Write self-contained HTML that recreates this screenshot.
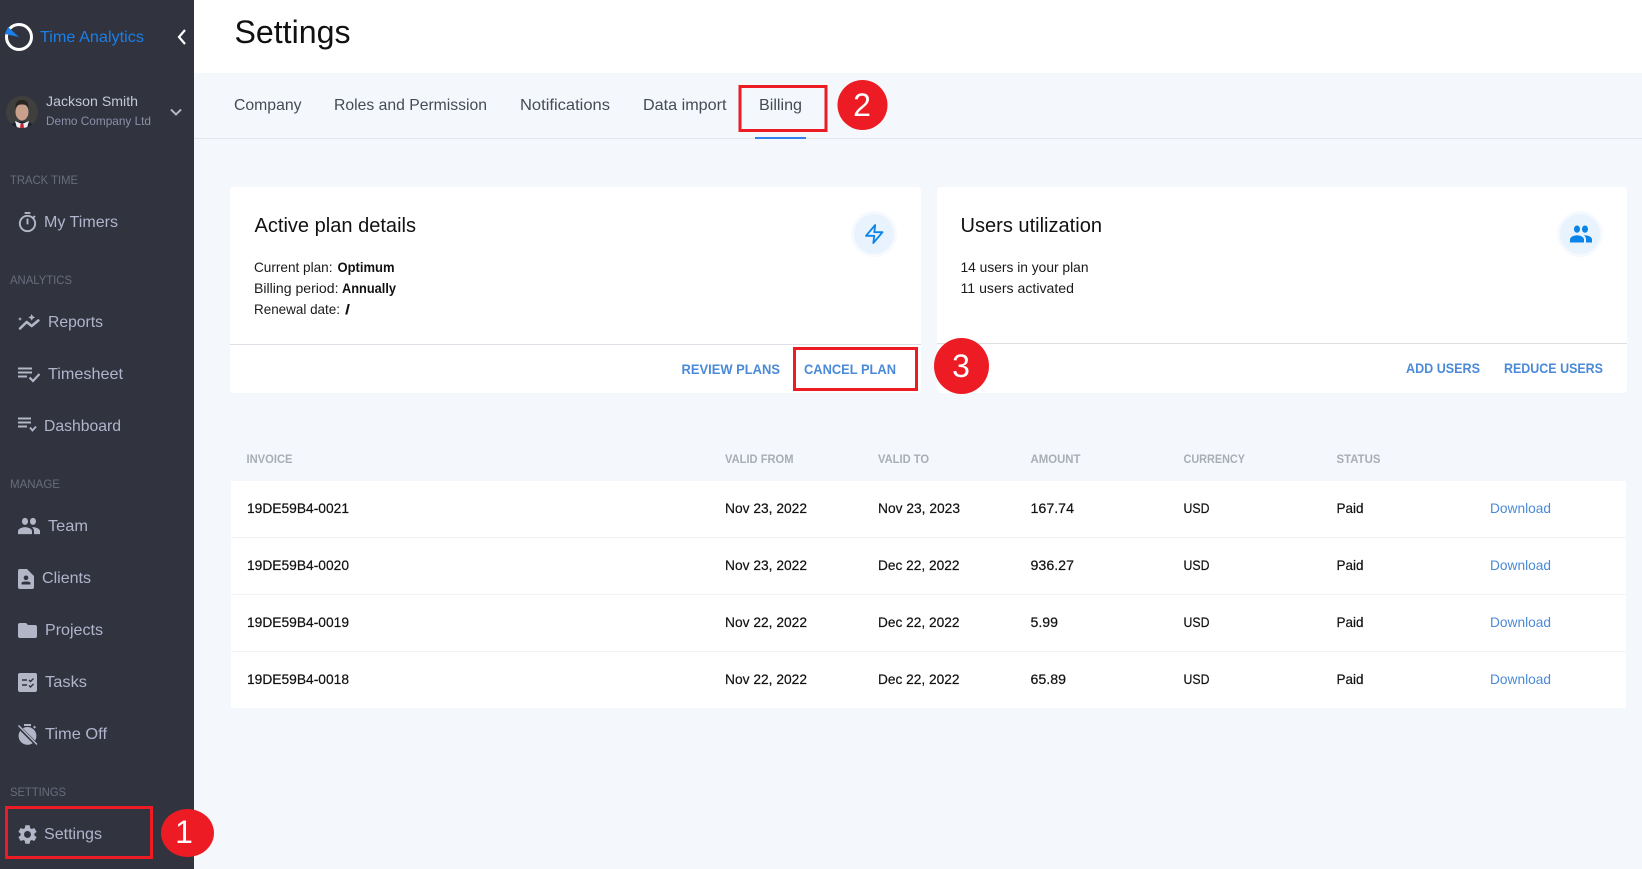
<!DOCTYPE html>
<html lang="en">
<head>
<meta charset="utf-8">
<title>Settings - Billing</title>
<style>
html,body{margin:0;padding:0;width:1642px;height:869px;overflow:hidden;background:#f4f7fb}
svg{display:block}
text{font-family:"Liberation Sans",sans-serif;white-space:pre}
.nav{font-size:16px;fill:#b0b5cc}
.sec{font-size:12px;fill:#686c7c}
.tab{font-size:16px;fill:#454a55}
.h2{font-size:20px;fill:#111}
.p{font-size:14px;fill:#1a1a1a}
.b{font-size:14px;font-weight:700;fill:#111}
.act{font-size:14px;font-weight:700;fill:#4a8ad8}
.th{font-size:12px;font-weight:700;fill:#a9adb5}
.td{font-size:14px;fill:#111;stroke:#111;stroke-width:.2}
.dl{font-size:14px;fill:#4a8ad8}
.num{font-size:32px;fill:#fff;text-anchor:middle}
.ic{fill:#b2b6c6}
</style>
</head>
<body>
<svg width="1642" height="869" viewBox="0 0 1642 869" xmlns="http://www.w3.org/2000/svg">
<rect width="1642" height="869" fill="#f4f7fb"/>
<!-- header -->
<rect x="194" width="1448" height="73" fill="#fff"/>
<text x="234.5" y="43" font-size="32" fill="#111" textLength="116" lengthAdjust="spacingAndGlyphs">Settings</text>
<!-- tabs -->
<rect x="194" y="138" width="1448" height="1" fill="#e3e6ec"/>
<text class="tab" x="234" y="110" textLength="67.5" lengthAdjust="spacingAndGlyphs">Company</text>
<text class="tab" x="334" y="110" textLength="153" lengthAdjust="spacingAndGlyphs">Roles and Permission</text>
<text class="tab" x="520" y="110" textLength="90" lengthAdjust="spacingAndGlyphs">Notifications</text>
<text class="tab" x="643" y="110" textLength="83.5" lengthAdjust="spacingAndGlyphs">Data import</text>
<text class="tab" x="759" y="110" textLength="43" lengthAdjust="spacingAndGlyphs">Billing</text>
<rect x="755" y="137" width="51" height="2" fill="#2f80ed"/>
<!-- sidebar -->
<rect width="194" height="869" fill="#31333f"/>
<circle cx="19" cy="37" r="12.5" fill="none" stroke="#fff" stroke-width="3"/>
<path d="M5 33L31 30Z" fill="none"/>
<path d="M5 34L8 27L19 37Z" fill="#1a7fe8"/>
<text x="40" y="42" font-size="16" fill="#1a7fe8" textLength="104" lengthAdjust="spacingAndGlyphs">Time Analytics</text>
<path d="M185 30L179 37L185 44" fill="none" stroke="#fff" stroke-width="2.200"/>
<!-- avatar -->
<clipPath id="av"><circle cx="22" cy="112" r="16"/></clipPath>
<g clip-path="url(#av)">
<rect x="6" y="96" width="32" height="32" fill="#3f3f3e"/>
<path d="M10 128C11 123 15 121.500 22 121.500S33 123 34 128Z" fill="#1c2030"/>
<path d="M15 121L22 124L29 121L27 128H17Z" fill="#eee"/>
<path d="M20.500 124H23.500L24 128H20Z" fill="#d02030"/>
<ellipse cx="22" cy="112" rx="6.500" ry="8.500" fill="#c8a08c"/>
<path d="M15.500 109C15 102 18 100 22 100S29 102 28.500 109C27.500 105 25 104.500 22 104.500S16.500 105 15.500 109Z" fill="#2a2522"/>
</g>
<text x="46" y="106" font-size="14" fill="#c4c8d8" textLength="92" lengthAdjust="spacingAndGlyphs">Jackson Smith</text>
<text x="46" y="125" font-size="12" fill="#8a90a8" textLength="105" lengthAdjust="spacingAndGlyphs">Demo Company Ltd</text>
<path d="M171 109.500L176 114.500L181 109.500" fill="none" stroke="#b2b6c6" stroke-width="2"/>

<text class="sec" x="10" y="184" textLength="68" lengthAdjust="spacingAndGlyphs">TRACK TIME</text>
<svg x="16" y="211" width="23" height="23" viewBox="0 0 24 24"><path class="ic" d="M15 1H9v2h6V1zm-4 13h2V8h-2v6zm8.030-6.610l1.420-1.420c-.43-.51-.9-.99-1.410-1.410l-1.420 1.420C16.070 4.740 14.120 4 12 4c-4.970 0-9 4.030-9 9s4.020 9 9 9 9-4.030 9-9c0-2.120-.74-4.070-1.970-5.610zM12 20c-3.870 0-7-3.130-7-7s3.130-7 7-7 7 3.130 7 7-3.130 7-7 7z"/></svg>
<text class="nav" x="44" y="227" textLength="74" lengthAdjust="spacingAndGlyphs">My Timers</text>

<text class="sec" x="10" y="284" textLength="62" lengthAdjust="spacingAndGlyphs">ANALYTICS</text>
<path d="M20 328.500L26.700 322L31.700 326L38.300 320.500" fill="none" stroke="#b2b6c6" stroke-width="2.600" stroke-linecap="round" stroke-linejoin="round"/>
<path d="M31.700 314l1.100 2.300 2.300 1.100-2.300 1.100-1.100 2.300-1.100-2.300-2.300-1.100 2.300-1.100zM20 317l.6 1.400 1.400.6-1.400.6-.6 1.400-.6-1.400-1.400-.6 1.400-.6z" class="ic"/>
<text class="nav" x="48" y="327" textLength="55" lengthAdjust="spacingAndGlyphs">Reports</text>

<path d="M18 368.500H32M18 372.500H32M18 376.500H27" fill="none" stroke="#b2b6c6" stroke-width="2"/>
<path d="M29.500 377.500L33 381L39.500 374" fill="none" stroke="#b2b6c6" stroke-width="2.200"/>
<text class="nav" x="48" y="379" textLength="75" lengthAdjust="spacingAndGlyphs">Timesheet</text>

<path d="M18 418.500H31M18 422.500H31M18 426.500H27" fill="none" stroke="#b2b6c6" stroke-width="2"/>
<path d="M30 427.500L32.500 430.500L36 426.500" fill="none" stroke="#b2b6c6" stroke-width="1.800"/>
<text class="nav" x="44" y="431" textLength="77" lengthAdjust="spacingAndGlyphs">Dashboard</text>

<text class="sec" x="10" y="488" textLength="50" lengthAdjust="spacingAndGlyphs">MANAGE</text>
<svg x="17" y="512" width="24" height="28" viewBox="0 0 24 24" preserveAspectRatio="none"><path class="ic" d="M16 11c1.660 0 2.990-1.340 2.990-3S17.660 5 16 5c-1.660 0-3 1.340-3 3s1.340 3 3 3zm-8 0c1.660 0 2.990-1.340 2.990-3S9.660 5 8 5C6.340 5 5 6.340 5 8s1.340 3 3 3zm0 2c-2.330 0-7 1.170-7 3.500V19h14v-2.500c0-2.330-4.670-3.500-7-3.500zm8 0c-.29 0-.62.020-.97.050 1.160.84 1.970 1.970 1.970 3.450V19h6v-2.500c0-2.330-4.670-3.500-7-3.500z"/></svg>
<text class="nav" x="48" y="531" textLength="40" lengthAdjust="spacingAndGlyphs">Team</text>

<path class="ic" fill-rule="evenodd" d="M20 569H27L34 576V587Q34 589 32 589H20Q18 589 18 587V571Q18 569 20 569ZM26 575.500a2.300 2.300 0 1 0 .01 0ZM21.500 584.500H30.500V583Q30.500 581.500 26 581.500T21.500 583Z"/>
<text class="nav" x="42" y="583" textLength="49" lengthAdjust="spacingAndGlyphs">Clients</text>

<path class="ic" d="M20 623H26L28 625H35Q37 625 37 627V636Q37 638 35 638H20Q18 638 18 636V625Q18 623 20 623Z"/>
<text class="nav" x="45" y="635" textLength="58" lengthAdjust="spacingAndGlyphs">Projects</text>

<rect class="ic" x="18" y="673" width="19" height="19" rx="2"/>
<path d="M22 680H27M22 685H27M29 680L30.500 681.500L33.500 678.500M29 685.500L30.500 687L33.500 684" fill="none" stroke="#31333f" stroke-width="1.400"/>
<text class="nav" x="45" y="687" textLength="42" lengthAdjust="spacingAndGlyphs">Tasks</text>

<path class="ic" d="M24 724H31V726H24ZM27.500 727a8.900 8.900 0 1 1-.01 0Z"/>
<path class="ic" d="M33 727l1.500-1.300 1.500 1.500-1.400 1.400z"/>
<path d="M18 726L37 745" stroke="#31333f" stroke-width="3.500"/>
<path d="M18.500 725.500L37 744.500" stroke="#b2b6c6" stroke-width="1.600"/>
<text class="nav" x="45" y="739" textLength="62" lengthAdjust="spacingAndGlyphs">Time Off</text>

<text class="sec" x="10" y="796" textLength="56" lengthAdjust="spacingAndGlyphs">SETTINGS</text>
<svg x="16" y="823" width="23" height="23" viewBox="0 0 24 24"><path class="ic" d="M19.140 12.940c.04-.3.060-.61.060-.94 0-.32-.02-.64-.07-.94l2.030-1.580c.18-.14.230-.41.120-.61l-1.920-3.320c-.12-.22-.37-.29-.59-.22l-2.390.96c-.5-.38-1.030-.7-1.620-.94l-.36-2.540c-.04-.24-.24-.41-.48-.41h-3.840c-.24 0-.43.170-.47.410l-.36 2.540c-.59.240-1.130.570-1.620.940l-2.390-.96c-.22-.08-.47 0-.59.220L2.740 8.870c-.12.210-.08.470.120.610l2.030 1.580c-.05.3-.09.630-.09.940s.020.640.070.940l-2.030 1.580c-.18.140-.23.410-.12.610l1.920 3.320c.12.220.370.290.590.220l2.390-.96c.5.380 1.030.7 1.620.94l.36 2.540c.05.240.240.410.480.410h3.840c.24 0 .44-.17.470-.41l.36-2.540c.59-.24 1.130-.56 1.620-.94l2.390.96c.22.080.47 0 .59-.22l1.920-3.320c.12-.22.070-.47-.12-.61l-2.010-1.580zM12 15.600c-1.980 0-3.600-1.620-3.600-3.600s1.620-3.600 3.600-3.600 3.600 1.620 3.600 3.600-1.620 3.600-3.600 3.600z"/></svg>
<text class="nav" x="44" y="839" textLength="58" lengthAdjust="spacingAndGlyphs">Settings</text>

<!-- card 1 -->
<rect x="230" y="187" width="691" height="206" rx="4" fill="#fff"/>
<rect x="230" y="344" width="691" height="1" fill="#dcdfe6"/>
<text class="h2" x="254.500" y="232" textLength="161.500" lengthAdjust="spacingAndGlyphs">Active plan details</text>
<text class="p" x="254" y="272" textLength="78.500" lengthAdjust="spacingAndGlyphs">Current plan:</text>
<text class="b" x="337.500" y="272" textLength="57" lengthAdjust="spacingAndGlyphs">Optimum</text>
<text class="p" x="254" y="293" textLength="84.500" lengthAdjust="spacingAndGlyphs">Billing period:</text>
<text class="b" x="342" y="293" textLength="54" lengthAdjust="spacingAndGlyphs">Annually</text>
<text class="p" x="254" y="314" textLength="86" lengthAdjust="spacingAndGlyphs">Renewal date:</text>
<text class="b" x="345" y="314" textLength="5" lengthAdjust="spacingAndGlyphs">/</text>
<circle cx="874" cy="234" r="23" fill="#f6fafe"/>
<circle cx="874" cy="234" r="20" fill="#e8f3fe"/>
<path d="M875.200 225L866 235.800H874.300L873.300 243L882.500 232.200H874.300Z" fill="none" stroke="#0a84e8" stroke-width="1.800" stroke-linejoin="round"/>
<text class="act" x="681.500" y="374" textLength="98.500" lengthAdjust="spacingAndGlyphs">REVIEW PLANS</text>
<text class="act" x="804" y="374" textLength="92" lengthAdjust="spacingAndGlyphs">CANCEL PLAN</text>

<!-- card 2 -->
<rect x="937" y="187" width="690" height="206" rx="4" fill="#fff"/>
<rect x="937" y="343" width="690" height="1" fill="#dcdfe2"/>
<text class="h2" x="960.500" y="232" textLength="141.500" lengthAdjust="spacingAndGlyphs">Users utilization</text>
<text class="p" x="960.500" y="272" textLength="128" lengthAdjust="spacingAndGlyphs">14 users in your plan</text>
<text class="p" x="960.500" y="293" textLength="113.500" lengthAdjust="spacingAndGlyphs">11 users activated</text>
<circle cx="1580" cy="234" r="23" fill="#f6fafe"/>
<circle cx="1580" cy="234" r="20" fill="#e8f3fe"/>
<svg x="1569" y="219.500" width="24" height="29" viewBox="0 0 24 24" preserveAspectRatio="none"><path fill="#0a84e8" d="M16 11c1.660 0 2.990-1.340 2.990-3S17.660 5 16 5c-1.660 0-3 1.340-3 3s1.340 3 3 3zm-8 0c1.660 0 2.990-1.340 2.990-3S9.660 5 8 5C6.340 5 5 6.340 5 8s1.340 3 3 3zm0 2c-2.330 0-7 1.170-7 3.500V19h14v-2.500c0-2.330-4.670-3.500-7-3.500zm8 0c-.29 0-.62.020-.97.050 1.160.84 1.970 1.970 1.970 3.450V19h6v-2.500c0-2.330-4.670-3.500-7-3.500z"/></svg>
<text class="act" x="1406" y="373" textLength="74" lengthAdjust="spacingAndGlyphs">ADD USERS</text>
<text class="act" x="1504" y="373" textLength="99" lengthAdjust="spacingAndGlyphs">REDUCE USERS</text>

<!-- table -->
<text class="th" x="246.500" y="463" textLength="46" lengthAdjust="spacingAndGlyphs">INVOICE</text>
<text class="th" x="725" y="463" textLength="68.500" lengthAdjust="spacingAndGlyphs">VALID FROM</text>
<text class="th" x="878" y="463" textLength="51" lengthAdjust="spacingAndGlyphs">VALID TO</text>
<text class="th" x="1030.500" y="463" textLength="50" lengthAdjust="spacingAndGlyphs">AMOUNT</text>
<text class="th" x="1183.500" y="463" textLength="61.500" lengthAdjust="spacingAndGlyphs">CURRENCY</text>
<text class="th" x="1336.500" y="463" textLength="44" lengthAdjust="spacingAndGlyphs">STATUS</text>
<rect x="231" y="481" width="1395" height="227" fill="#fff"/>
<rect x="231" y="537" width="1395" height="1" fill="#f1f3f6"/>
<rect x="231" y="594" width="1395" height="1" fill="#f1f3f6"/>
<rect x="231" y="651" width="1395" height="1" fill="#f1f3f6"/>

<text class="td" x="247" y="513" textLength="102" lengthAdjust="spacingAndGlyphs">19DE59B4-0021</text>
<text class="td" x="725" y="513" textLength="82" lengthAdjust="spacingAndGlyphs">Nov 23, 2022</text>
<text class="td" x="878" y="513" textLength="82" lengthAdjust="spacingAndGlyphs">Nov 23, 2023</text>
<text class="td" x="1030.500" y="513" textLength="43.500" lengthAdjust="spacingAndGlyphs">167.74</text>
<text class="td" x="1183.500" y="513" textLength="26" lengthAdjust="spacingAndGlyphs">USD</text>
<text class="td" x="1336.500" y="513" textLength="27" lengthAdjust="spacingAndGlyphs">Paid</text>
<text class="dl" x="1490" y="513" textLength="61" lengthAdjust="spacingAndGlyphs">Download</text>

<text class="td" x="247" y="570" textLength="102" lengthAdjust="spacingAndGlyphs">19DE59B4-0020</text>
<text class="td" x="725" y="570" textLength="82" lengthAdjust="spacingAndGlyphs">Nov 23, 2022</text>
<text class="td" x="878" y="570" textLength="81.500" lengthAdjust="spacingAndGlyphs">Dec 22, 2022</text>
<text class="td" x="1030.500" y="570" textLength="43.500" lengthAdjust="spacingAndGlyphs">936.27</text>
<text class="td" x="1183.500" y="570" textLength="26" lengthAdjust="spacingAndGlyphs">USD</text>
<text class="td" x="1336.500" y="570" textLength="27" lengthAdjust="spacingAndGlyphs">Paid</text>
<text class="dl" x="1490" y="570" textLength="61" lengthAdjust="spacingAndGlyphs">Download</text>

<text class="td" x="247" y="627" textLength="102" lengthAdjust="spacingAndGlyphs">19DE59B4-0019</text>
<text class="td" x="725" y="627" textLength="82" lengthAdjust="spacingAndGlyphs">Nov 22, 2022</text>
<text class="td" x="878" y="627" textLength="81.500" lengthAdjust="spacingAndGlyphs">Dec 22, 2022</text>
<text class="td" x="1030.500" y="627" textLength="27.500" lengthAdjust="spacingAndGlyphs">5.99</text>
<text class="td" x="1183.500" y="627" textLength="26" lengthAdjust="spacingAndGlyphs">USD</text>
<text class="td" x="1336.500" y="627" textLength="27" lengthAdjust="spacingAndGlyphs">Paid</text>
<text class="dl" x="1490" y="627" textLength="61" lengthAdjust="spacingAndGlyphs">Download</text>

<text class="td" x="247" y="684" textLength="102" lengthAdjust="spacingAndGlyphs">19DE59B4-0018</text>
<text class="td" x="725" y="684" textLength="82" lengthAdjust="spacingAndGlyphs">Nov 22, 2022</text>
<text class="td" x="878" y="684" textLength="81.500" lengthAdjust="spacingAndGlyphs">Dec 22, 2022</text>
<text class="td" x="1030.500" y="684" textLength="35.500" lengthAdjust="spacingAndGlyphs">65.89</text>
<text class="td" x="1183.500" y="684" textLength="26" lengthAdjust="spacingAndGlyphs">USD</text>
<text class="td" x="1336.500" y="684" textLength="27" lengthAdjust="spacingAndGlyphs">Paid</text>
<text class="dl" x="1490" y="684" textLength="61" lengthAdjust="spacingAndGlyphs">Download</text>

<!-- annotations -->
<rect x="6.500" y="807.500" width="145" height="50" fill="none" stroke="#ed1c24" stroke-width="3"/>
<ellipse cx="187.500" cy="833" rx="26.500" ry="24" fill="#ed1c24"/>
<text class="num" x="184" y="843">1</text>
<rect x="740" y="86.500" width="86" height="44" fill="none" stroke="#ed1c24" stroke-width="3"/>
<circle cx="862.500" cy="105" r="25" fill="#ed1c24"/>
<text class="num" x="862" y="116">2</text>
<rect x="794.500" y="348.500" width="122" height="41" fill="none" stroke="#ed1c24" stroke-width="3"/>
<ellipse cx="961.500" cy="366" rx="27.500" ry="28" fill="#ed1c24"/>
<text class="num" x="961" y="377">3</text>
</svg>
</body>
</html>
